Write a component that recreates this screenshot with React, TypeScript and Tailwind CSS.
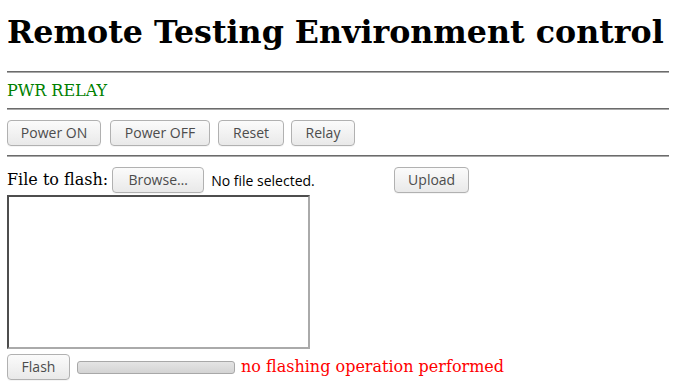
import React from 'react';

const btn =
  "h-[26px] rounded-[4px] border border-[#b1b1b1] bg-gradient-to-b from-[#fbfbfb] to-[#e9e9e9] text-[#4c4c4c] text-[14px] leading-none font-['Open_Sans','DejaVu_Sans',sans-serif] shadow-[0_1px_0_rgba(0,0,0,0.04)] flex items-center justify-center";

function Rule() {
  return <div className="h-[2px] border-t border-t-[#6b6b6b] border-b border-b-[#a8a8a8] bg-[#8a8a8a]" />;
}

export default function App() {
  return (
    <div className="px-[7px] bg-white min-h-[384px] font-['DejaVu_Serif',serif] text-black">
      <h1 className="pt-[13px] text-[31.7px] leading-[37px] font-bold whitespace-nowrap">
        Remote Testing Environment control
      </h1>
      <div className="mt-[21px]">
        <Rule />
      </div>
      <p className="text-[16px] leading-[19px] text-[#008000] py-[8px]">PWR RELAY</p>
      <Rule />

      <div className="flex mt-[10px] mb-[9px]">
        <button className={btn + ' w-[94px]'}>Power ON</button>
        <button className={btn + ' w-[100px] ml-[9px]'}>Power OFF</button>
        <button className={btn + ' w-[66px] ml-[8px]'}>Reset</button>
        <button className={btn + ' w-[64px] ml-[7px]'}>Relay</button>
      </div>
      <Rule />

      <div className="flex items-center mt-[10px] h-[26px] text-[16px]">
        <span>File to flash:</span>
        <button className={btn + ' w-[92px] ml-[4px]'}>Browse…</button>
        <span className="ml-[7px] w-[107px] text-[14px] font-['Open_Sans','DejaVu_Sans',sans-serif] whitespace-nowrap">
          No file selected.
        </span>
        <button className={btn + ' w-[75px] ml-[76px]'}>Upload</button>
      </div>

      <textarea className="block mt-[2px] w-[303px] h-[154px] border-2 border-t-[#4d4d4d] border-l-[#4d4d4d] border-r-[#aaaaaa] border-b-[#aaaaaa] resize-none outline-none" />

      <div className="flex items-center mt-[5px] h-[26px]">
        <button className={btn + ' w-[63px]'}>Flash</button>
        <div className="ml-[7px] w-[158px] h-[13px] rounded-[3px] border border-[#a8a8a8] bg-gradient-to-b from-[#e4e4e4] to-[#d4d4d4]" />
        <span className="ml-[6px] text-[16px] text-[#ff0000]">no flashing operation performed</span>
      </div>
    </div>
  );
}
